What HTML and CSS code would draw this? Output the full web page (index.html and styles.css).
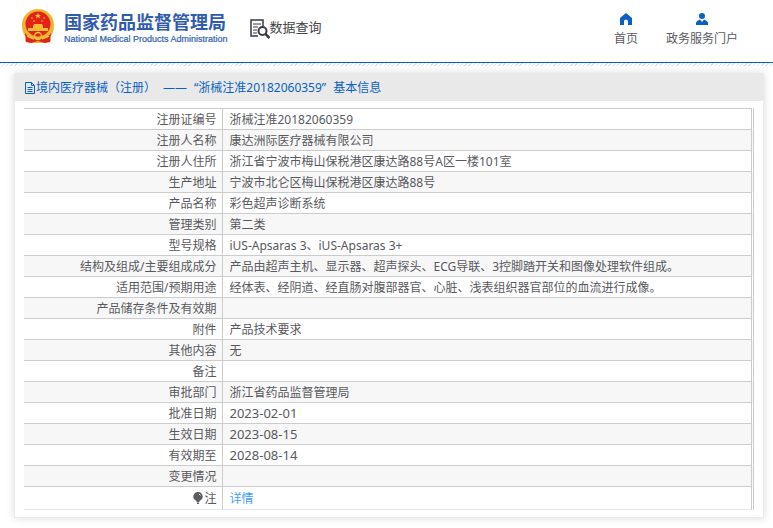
FILE: index.html
```html
<!DOCTYPE html>
<html lang="zh-CN">
<head>
<meta charset="utf-8">
<title>国家药品监督管理局 数据查询</title>
<link rel="stylesheet" href="styles.css">
</head>
<body>
<header class="site-header">
  <a class="brand" href="#">
    <svg class="emblem" viewBox="0 0 34 36" aria-hidden="true">
      <path d="M17 1C8 1 1 8 1 17c0 6 2 10 4 12l-1 4 6 2h14l6-2-1-4c2-2 4-6 4-12C33 8 26 1 17 1z" fill="#edb52c"/>
      <path d="M4 25c2 3 5 4 8 5l5 2 5-2c3-1 6-2 8-5l-1 9-5 1-7-2-7 2-5-1z" fill="#dc2618"/>
      <circle cx="17" cy="16" r="12.500" fill="#e32219"/>
      <path d="M17 5l.8 2h2.200l-1.700 1.300.6 2.100-1.900-1.300-1.900 1.300.6-2.100L14 7h2.200z" fill="#f8cf3a"/>
      <g fill="#f5bd32"><circle cx="11" cy="10" r=".8"/><circle cx="23" cy="10" r=".8"/><circle cx="13" cy="13" r=".8"/><circle cx="21" cy="13" r=".8"/></g>
      <path d="M12 18l1-2h8l1 2v2h5v3H7v-3h5z" fill="#f3be36"/>
      <circle cx="17" cy="28" r="3.500" fill="none" stroke="#f4c33c" stroke-width="1.500"/>
      <path d="M6 28l7 3m15-3l-7 3" stroke="#f4c33c" stroke-width="1.500"/>
    </svg>
    <span class="brand-text">
      <span class="brand-cn">国家药品监督管理局</span>
      <span class="brand-en">National Medical Products Administration</span>
    </span>
  </a>
  <div class="section">
    <svg class="section-icon" viewBox="0 0 20 20" fill="none" stroke="#39394a" aria-hidden="true">
      <path d="M8 17H1V1h12v6" stroke-width="1.500"/>
      <path d="M3 5h8M3 8h5M3 11h4M3 14h4" stroke-width="1.200"/>
      <circle cx="12.500" cy="12" r="4" stroke-width="2"/>
      <path d="M15.500 15l4 4" stroke-width="2.500"/>
    </svg>
    <span>数据查询</span>
  </div>
  <nav class="nav">
    <a href="#">
      <svg viewBox="0 0 12 12" aria-hidden="true"><path d="M6 0L0 5v7h4V8.500a2 2 0 0 1 4 0V12h4V5z" fill="#0a5fc4"/></svg>
      <span>首页</span>
    </a>
    <a href="#">
      <svg viewBox="0 0 12 12" aria-hidden="true"><circle cx="6" cy="3" r="3" fill="#0a5fc4"/><path d="M0 12V9.500Q1 7.500 4 6.500L6 9l2-2.500q3 1 4 3V12z" fill="#0a5fc4"/></svg>
      <span>政务服务门户</span>
    </a>
  </nav>
</header>
<main class="panel">
  <h1 class="panel-title">
    <svg viewBox="0 0 12 12" fill="none" stroke="#0a5fc4" aria-hidden="true"><path d="M1.500.5h6l3 3v8h-9zM7.500.5v3h3M3.500 5.500h5M3.500 7.500h5M3.500 9.500h5"/></svg>
    <span class="title-parts">
      <span>境内医疗器械（注册）</span>
      <span>——</span>
      <span>“浙械注准20182060359”</span>
      <span>基本信息</span>
    </span>
  </h1>
  <div class="panel-body">
    <table class="info">
      <tbody>
        <tr><th scope="row">注册证编号</th><td>浙械注准20182060359</td></tr>
        <tr><th scope="row">注册人名称</th><td>康达洲际医疗器械有限公司</td></tr>
        <tr><th scope="row">注册人住所</th><td>浙江省宁波市梅山保税港区康达路88号A区一楼101室</td></tr>
        <tr><th scope="row">生产地址</th><td>宁波市北仑区梅山保税港区康达路88号</td></tr>
        <tr><th scope="row">产品名称</th><td>彩色超声诊断系统</td></tr>
        <tr><th scope="row">管理类别</th><td>第二类</td></tr>
        <tr><th scope="row">型号规格</th><td>iUS-Apsaras 3、iUS-Apsaras 3+</td></tr>
        <tr><th scope="row">结构及组成/主要组成成分</th><td>产品由超声主机、显示器、超声探头、ECG导联、3控脚踏开关和图像处理软件组成。</td></tr>
        <tr><th scope="row">适用范围/预期用途</th><td>经体表、经阴道、经直肠对腹部器官、心脏、浅表组织器官部位的血流进行成像。</td></tr>
        <tr><th scope="row">产品储存条件及有效期</th><td></td></tr>
        <tr><th scope="row">附件</th><td>产品技术要求</td></tr>
        <tr><th scope="row">其他内容</th><td>无</td></tr>
        <tr><th scope="row">备注</th><td></td></tr>
        <tr><th scope="row">审批部门</th><td>浙江省药品监督管理局</td></tr>
        <tr><th scope="row">批准日期</th><td class="date">2023-02-01</td></tr>
        <tr><th scope="row">生效日期</th><td class="date">2023-08-15</td></tr>
        <tr><th scope="row">有效期至</th><td class="date">2028-08-14</td></tr>
        <tr><th scope="row">变更情况</th><td></td></tr>
        <tr class="note"><th scope="row"><svg class="bulb" viewBox="0 0 10 12" aria-hidden="true"><path d="M5 0a4.500 4.500 0 0 0-3 8l1.500 1v1h3V9L8 8a4.500 4.500 0 0 0-3-8zM4 10.500h2V12H4z" fill="#5c5e64"/><path d="M6 2l1.500 1.500" stroke="#fff"/></svg>注</th><td><a href="#">详情</a></td></tr>
      </tbody>
    </table>
  </div>
</main>
</body>
</html>
```
FILE: styles.css
```css
* { box-sizing: border-box; }

body {
  margin: 0;
  background: #fff;
  color: #58595e;
  font: 12px/16px "Noto Sans", "Noto Sans CJK SC", sans-serif;
}

a { color: inherit; text-decoration: none; }

.site-header {
  display: flex;
  align-items: flex-start;
  height: 63px;
  padding: 8px 35px 0 21px;
  border-bottom: 1px solid #0a5fc4;
}

/* fine hatched strip under the header rule */
.site-header + .panel::before {
  content: "";
  position: absolute;
  top: 63px;
  left: 0;
  right: 0;
  height: 3px;
  background: repeating-linear-gradient(135deg, #e2e2e2 0 1px, #fff 1px 3px);
}

.brand { display: flex; gap: 9px; color: #2f5cae; }
.emblem { width: 34px; height: 36px; }
.brand-text { display: flex; flex-direction: column; padding-top: 2px; white-space: nowrap; }
.brand-cn { font: bold 18px/22px "Noto Sans CJK SC", sans-serif; }
.brand-en { font: 9px/14px "Liberation Sans", sans-serif; -webkit-text-stroke: 0.2px; }

.section {
  display: flex;
  align-items: center;
  margin: 6px 0 0 22px;
  color: #444;
  font-size: 13px;
  line-height: 20px;
}
.section-icon { width: 20px; height: 20px; margin-top: 5px; }

.nav { display: flex; gap: 28px; margin-left: auto; padding-top: 5px; }
.nav a { display: flex; flex-direction: column; align-items: center; gap: 5px; }
.nav svg { width: 12px; height: 12px; }
.nav span { line-height: 18px; }

.panel {
  margin: 10px 9px 10px 14px;
  border: 1px solid #ebebeb;
  border-top: 0;
  box-shadow: 0 0 8px rgba(0, 0, 0, 0.15);
}
.panel-title {
  display: flex;
  align-items: center;
  height: 28px;
  margin: 0;
  padding: 2px 9px 0;
  background: #e9e9e9;
  color: #0a5fc4;
  font-size: 12px;
  font-weight: 400;
}
.panel-title svg { width: 12px; height: 12px; }
.title-parts { display: flex; gap: 7px; }
.panel-body { padding: 7px 9px 7px; }

.info {
  width: 100%;
  border-collapse: collapse;
  border: 1px solid #ccc;
  border-left: 0;
  border-right: 3px double #ccc;
  border-bottom-color: #e6e6ee;
}
.info tr { height: 21px; }
.info tr:nth-child(even) { background: #f7f7f7; }
.info .note { height: 23px; }
.info th, .info td { padding: 3px 5px 1px 7px; border-top: 1px solid #ccc; vertical-align: middle; }
.info th { width: 198px; border-right: 1px solid #ccc; font-weight: 400; text-align: right; }
.info td a { color: #409eff; }
.info .date { font-size: 13px; padding: 2px 5px 2px 7px; }
.bulb { width: 10px; height: 12px; margin-right: 1px; vertical-align: -1px; }
```
